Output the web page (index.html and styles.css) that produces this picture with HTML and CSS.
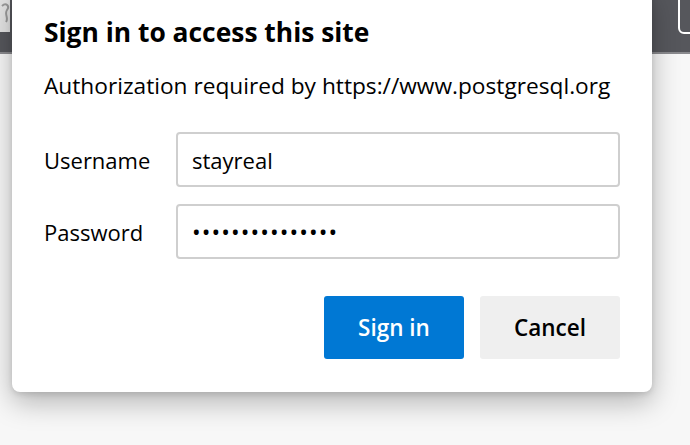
FILE: index.html
```html
<!DOCTYPE html>
<html lang="en">
<head>
<meta charset="utf-8">
<title>Sign in</title>
<link rel="stylesheet" href="styles.css">
</head>
<body>
<div class="backdrop">
  <div class="chrome">
    <div class="tile">
      <svg class="tile-icon" width="12" height="32" viewBox="0 0 12 32"><path d="M2 6 C6 2 10 6 7 10 C4 14 9 18 6 22" fill="none" stroke="#9a9a9a" stroke-width="2"/></svg>
    </div>
    <div class="tab-box"></div>
  </div>
  <div class="page"></div>
</div>
<div class="dialog">
  <h1 class="title">Sign in to access this site</h1>
  <p class="subtitle">Authorization required by https://www.postgresql.org</p>
  <div class="form">
    <label class="label" for="u">Username</label>
    <div class="field" id="u">stayreal</div>
    <label class="label" for="p">Password</label>
    <div class="field password" id="p">•••••••••••••••</div>
  </div>
  <div class="actions">
    <button class="btn primary">Sign in</button>
    <button class="btn secondary">Cancel</button>
  </div>
</div>
</body>
</html>
```
FILE: styles.css
```css
html, body {
  margin: 0;
  padding: 0;
  width: 690px;
  height: 445px;
  overflow: hidden;
  font-family: "Open Sans", "Noto Sans", sans-serif;
  color: #000;
}
.backdrop {
  display: flex;
  flex-direction: column;
  height: 445px;
}
.chrome {
  height: 52px;
  background: #56575c;
  border-bottom: 2px solid #8a8a8e;
  position: relative;
}
.tile {
  width: 10px;
  height: 32px;
  background: #e4e4e4;
  overflow: hidden;
}
.tab-box {
  position: absolute;
  right: -12px;
  top: -6px;
  width: 20px;
  height: 36px;
  border: 2px solid #fff;
  border-radius: 6px;
}
.page {
  flex: 1;
  background: #f7f7f7;
}
.dialog {
  position: absolute;
  left: 12px;
  top: -10px;
  width: 640px;
  height: 402px;
  box-sizing: border-box;
  background: #fff;
  border-radius: 8px;
  box-shadow: 0 10px 28px rgba(0, 0, 0, 0.28), 0 2px 6px rgba(0, 0, 0, 0.12);
  padding: 26px 32px 0 32px;
  display: flex;
  flex-direction: column;
}
.title {
  margin: 0;
  font-size: 26.4px;
  font-weight: 700;
  line-height: 32px;
}
.subtitle {
  margin: 23px 0 0 0;
  font-size: 22.7px;
  line-height: 30px;
}
.form {
  margin-top: 31px;
  display: grid;
  grid-template-columns: 132px 1fr;
  row-gap: 17px;
  align-items: center;
}
.label {
  font-size: 22px;
}
.field {
  height: 55px;
  box-sizing: border-box;
  border: 2px solid #cfcfcf;
  border-radius: 4px;
  padding: 0 14px;
  font-size: 22px;
  display: flex;
  align-items: center;
}
.password {
  letter-spacing: 1.1px;
  font-size: 23px;
}
.actions {
  margin-top: 37px;
  display: flex;
  justify-content: flex-end;
  gap: 16px;
}
.btn {
  width: 140px;
  height: 63px;
  border: none;
  border-radius: 3px;
  font-family: inherit;
  font-size: 22.5px;
  font-weight: 600;
}
.primary {
  background: #0078d4;
  color: #fff;
}
.secondary {
  background: #efefef;
  color: #000;
}
```
